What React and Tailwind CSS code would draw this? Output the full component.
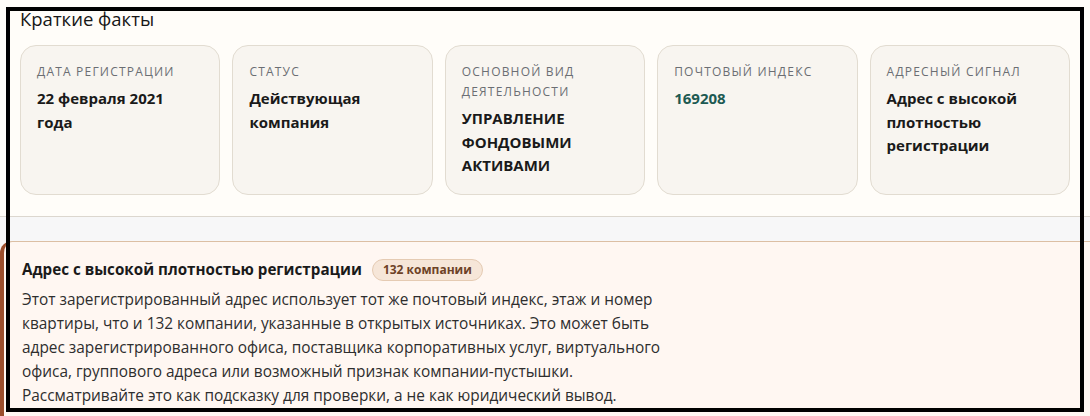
import React from "react";

const facts = [
  { label: ["Дата регистрации"], value: ["22 февраля 2021", "года"] },
  { label: ["Статус"], value: ["Действующая", "компания"] },
  { label: ["Основной вид", "деятельности"], value: ["УПРАВЛЕНИЕ", "ФОНДОВЫМИ", "АКТИВАМИ"] },
  { label: ["Почтовый индекс"], value: ["169208"], accent: true },
  { label: ["Адресный сигнал"], value: ["Адрес с высокой", "плотностью", "регистрации"] },
];

const body = [
  "Этот зарегистрированный адрес использует тот же почтовый индекс, этаж и номер",
  "квартиры, что и 132 компании, указанные в открытых источниках. Это может быть",
  "адрес зарегистрированного офиса, поставщика корпоративных услуг, виртуального",
  "офиса, группового адреса или возможный признак компании-пустышки.",
  "Рассматривайте это как подсказку для проверки, а не как юридический вывод.",
];

export default function App() {
  return (
    <div
      className="relative w-[1090px] h-[416px] overflow-hidden bg-[#f7f7f8]"
      style={{ fontFamily: '"Open Sans", "Noto Sans", sans-serif' }}
    >
      <section className="bg-[#fffdf9] border-b border-[#dcd7cf] px-5 pt-[5px] pb-[21px]">
        <h2 className="text-[18.5px] leading-[28px] font-medium text-[#161616] mb-3">Краткие факты</h2>
        <div className="grid grid-cols-5 gap-3">
          {facts.map((f, i) => (
            <div
              key={i}
              className="rounded-2xl border border-[#e2dcd1] bg-[#f8f5f0] p-4 min-h-[149px]"
            >
              <div className="text-[12px] leading-[20px] uppercase tracking-[0.1em] text-[#6b6e73]">
                {f.label.map((l, j) => (
                  <div key={j}>{l}</div>
                ))}
              </div>
              <div
                className={
                  "mt-[5px] text-[15px] leading-[23.5px] font-bold " +
                  (f.accent ? "text-[#1d5a52]" : "text-[#1a1a1a]")
                }
              >
                {f.value.map((v, j) => (
                  <div key={j}>{v}</div>
                ))}
              </div>
            </div>
          ))}
        </div>
      </section>

      <div className="h-6" />

      <section className="rounded-tl-xl border-t border-[#dcbfa4] border-l-4 border-l-[#9b4e2c] bg-[#fff7f2] pl-[18px] pt-[17px] pb-6">
        <div className="flex items-center gap-[10px] h-[22px]">
          <h3 className="text-[15.2px] font-bold text-[#1a1a1a] whitespace-nowrap">
            Адрес с высокой плотностью регистрации
          </h3>
          <span className="inline-flex items-center h-[22px] px-[10px] rounded-full border border-[#e5cbb3] bg-[#f6e6d8] text-[12px] font-bold text-[#6d4226] whitespace-nowrap">
            132 компании
          </span>
        </div>
        <p className="mt-[7px] text-[15.4px] leading-[24px] text-[#2e2e2e]">
          {body.map((l, j) => (
            <span key={j} className="block whitespace-nowrap">
              {l}
            </span>
          ))}
        </p>
      </section>

      <div className="pointer-events-none absolute left-[6px] top-[7px] w-[1078px] h-[405px] border-4 border-black" />
    </div>
  );
}
